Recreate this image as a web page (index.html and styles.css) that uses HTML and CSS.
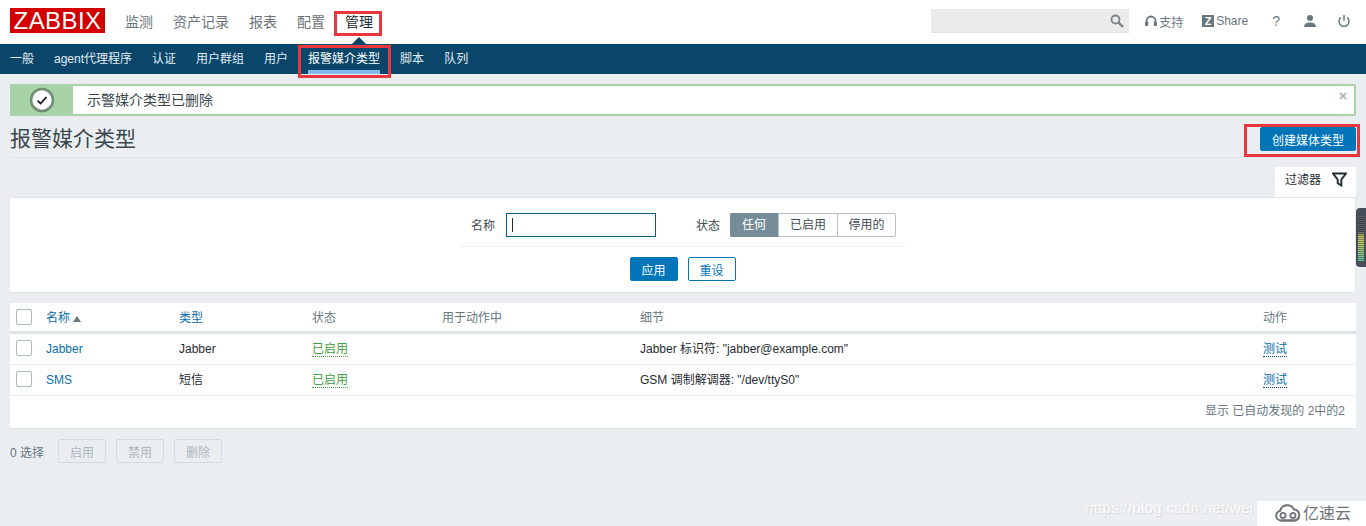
FILE: index.html
```html
<!DOCTYPE html>
<html>
<head>
  <title>报警媒介类型</title>
  <meta charset="UTF-8">
  <link rel="stylesheet" href="styles.css">
</head>
<body>
<header class="topbar">
  <div class="logo">ZABBIX</div>
  <nav class="mainNav">
    <a>监测</a>
    <a>资产记录</a>
    <a>报表</a>
    <a>配置</a>
    <a class="current">管理</a>
  </nav>
  <div class="topTools">
    <div class="searchBox">
      <svg width="14" height="14" viewBox="0 0 14 14"><circle cx="5.500" cy="5.500" r="4" fill="none" stroke="#7a8288" stroke-width="1.800"/><path d="M8.500 8.500L13 13" stroke="#7a8288" stroke-width="2.400"/></svg>
    </div>
    <a class="tool toolSupport">
      <svg width="12" height="13" viewBox="0 0 12 13"><path d="M1.500 9V6a4.500 4.500 0 0 1 9 0v3" fill="none" stroke="#68777f" stroke-width="1.800"/><rect x="0" y="6.500" width="3.200" height="4.500" rx="1" fill="#68777f"/><rect x="8.800" y="6.500" width="3.200" height="4.500" rx="1" fill="#68777f"/></svg>
      支持
    </a>
    <a class="tool toolShare"><span class="zBadge">Z</span>Share</a>
    <a class="tool toolHelp">?</a>
    <a class="tool toolUser">
      <svg width="14" height="14" viewBox="0 0 14 14"><circle cx="7" cy="4" r="3" fill="#68777f"/><path d="M1 13c0-3.200 2.600-4.600 6-4.600s6 1.400 6 4.600z" fill="#68777f"/></svg>
    </a>
    <a class="tool toolPower">
      <svg width="14" height="14" viewBox="0 0 14 14"><path d="M4 3.300a5 5 0 1 0 6 0" fill="none" stroke="#68777f" stroke-width="1.500"/><path d="M7 1v6" stroke="#68777f" stroke-width="1.500"/></svg>
    </a>
  </div>
</header>

<nav class="subNav">
  <a>一般</a>
  <a>agent代理程序</a>
  <a>认证</a>
  <a>用户群组</a>
  <a>用户</a>
  <a class="selected">报警媒介类型</a>
  <a>脚本</a>
  <a>队列</a>
</nav>

<main class="content">
  <div class="msgGood">
    <div class="msgIcon">
      <svg width="26" height="26" viewBox="0 0 26 26"><circle cx="13" cy="13" r="11" fill="#fff" stroke="#6f8f70" stroke-width="2.600"/><path d="M8.500 13.500l3 3 6-6.500" fill="none" stroke="#111" stroke-width="1.700"/></svg>
    </div>
    <div class="msgText">示警媒介类型已删除</div>
    <svg class="msgClose" width="8" height="8" viewBox="0 0 8 8"><path d="M1 1l6 6M7 1L1 7" stroke="#b4bcc2" stroke-width="2"/></svg>
  </div>

  <div class="titleRow">
    <h1>报警媒介类型</h1>
    <button class="btnPrimary btnCreate">创建媒体类型</button>
  </div>

  <div class="filterTabRow">
    <div class="filterTab">
      过滤器
      <svg width="15" height="15" viewBox="0 0 15 15"><path d="M1 1.500h13L9.300 7.500v6l-3.600-2.200v-3.800z" fill="none" stroke="#1f2c33" stroke-width="1.900"/></svg>
    </div>
  </div>
  <section class="filterBox">
    <div class="filterFields">
      <label>名称</label>
      <div class="textInput"><span class="caret"></span></div>
      <label class="labelStatus">状态</label>
      <div class="radioGroup">
        <span class="on">任何</span>
        <span>已启用</span>
        <span>停用的</span>
      </div>
    </div>
    <div class="filterButtons">
      <button class="btnPrimary btnSmall">应用</button>
      <button class="btnAlt btnSmall">重设</button>
    </div>
  </section>

  <section class="listBox">
    <table class="list">
      <colgroup>
        <col class="colCheck"><col class="colName"><col class="colType"><col class="colStatus">
        <col class="colUsed"><col class="colDetail"><col class="colAction">
      </colgroup>
      <thead>
        <tr>
          <th><span class="check"></span></th>
          <th><a class="link">名称</a><span class="arrowUp"></span></th>
          <th><a class="link">类型</a></th>
          <th>状态</th>
          <th>用于动作中</th>
          <th>细节</th>
          <th>动作</th>
        </tr>
      </thead>
      <tbody>
        <tr>
          <td><span class="check"></span></td>
          <td><a class="link">Jabber</a></td>
          <td>Jabber</td>
          <td><a class="enabled">已启用</a></td>
          <td></td>
          <td>Jabber 标识符: "jabber@example.com"</td>
          <td><a class="dotted">测试</a></td>
        </tr>
        <tr>
          <td><span class="check"></span></td>
          <td><a class="link">SMS</a></td>
          <td>短信</td>
          <td><a class="enabled">已启用</a></td>
          <td></td>
          <td>GSM 调制解调器: "/dev/ttyS0"</td>
          <td><a class="dotted">测试</a></td>
        </tr>
      </tbody>
    </table>
    <div class="listStats">显示 已自动发现的 2中的2</div>
  </section>

  <div class="actionBar">
    <span class="selCount">0 选择</span>
    <button class="btnOff">启用</button>
    <button class="btnOff">禁用</button>
    <button class="btnOff">删除</button>
  </div>
</main>

<!-- annotations drawn over the screenshot -->
<div class="mark markAdmin"></div>
<div class="mark markMedia"></div>
<div class="mark markCreate"></div>

<div class="sideMeter"><span></span></div>
<div class="watermark">https://blog.csdn.net/wei</div>
<div class="yisu">
  <svg width="26" height="18" viewBox="0 0 26 18"><path d="M6 16.500a4.800 4.800 0 0 1-1-9.500A7.500 7.500 0 0 1 19 5.500a5.600 5.600 0 0 1 1 11z" fill="none" stroke="#6e7377" stroke-width="2"/><path d="M6 16.500h14" stroke="#6e7377" stroke-width="2"/><circle cx="8" cy="11.500" r="2.600" fill="none" stroke="#6e7377" stroke-width="1.800"/><circle cx="18" cy="11.500" r="2.600" fill="none" stroke="#6e7377" stroke-width="1.800"/></svg>
  <span>亿速云</span>
</div>
</body>
</html>
```

FILE: styles.css
```css
* {
  box-sizing: border-box;
}

body {
  margin: 0;
  height: 526px;
  overflow: hidden;
  background-color: #ebeef0;
  color: #1f2c33;
  font-family: "Liberation Sans", "Noto Sans CJK SC", sans-serif;
  font-size: 12px;
}

button {
  font-family: inherit;
  font-size: 12px;
  border-radius: 2px;
  padding: 0;
}

/* top bar */
.topbar {
  display: flex;
  align-items: center;
  height: 44px;
  padding: 0 10px;
  background-color: #fff;
}

.logo {
  width: 95px;
  height: 25px;
  margin-top: -4px;
  background-color: #d40000;
  color: #fff;
  font-size: 24px;
  line-height: 25px;
  text-align: center;
  letter-spacing: 0.4px;
}

.mainNav {
  display: flex;
  gap: 20px;
  margin-left: 20px;
  margin-top: -2px;
  font-size: 14px;
  color: #6b7478;
}

.mainNav .current {
  color: #1f2c33;
}

.topTools {
  display: flex;
  align-items: center;
  margin-left: auto;
  margin-top: -2px;
  color: #68777f;
}

.searchBox {
  display: flex;
  align-items: center;
  justify-content: flex-end;
  width: 198px;
  height: 24px;
  padding-right: 5px;
  background-color: #ebebeb;
  border-bottom: 1px solid #e2e2e2;
}

.tool {
  display: flex;
  align-items: center;
}

.toolSupport {
  gap: 2px;
  margin-left: 16px;
}

.toolShare {
  margin-left: 19px;
}

.zBadge {
  width: 12px;
  height: 12px;
  margin-right: 2px;
  background-color: #68777f;
  color: #fff;
  font-size: 11px;
  font-weight: bold;
  line-height: 12px;
  text-align: center;
}

.toolHelp {
  margin-left: 24px;
  font-size: 14px;
}

.toolUser {
  margin-left: 23px;
}

.toolPower {
  margin-left: 20px;
  margin-right: 5px;
}

/* sub nav */
.subNav {
  position: relative;
  display: flex;
  gap: 20px;
  height: 30px;
  padding: 0 10px;
  background-color: #0a466a;
  color: #e4edf3;
  line-height: 30px;
}

.subNav::before {
  content: "";
  position: absolute;
  left: 352px;
  top: -7px;
  border-left: 7px solid transparent;
  border-right: 7px solid transparent;
  border-bottom: 7px solid #0a466a;
}

.subNav .selected {
  color: #fff;
  height: 30px;
  border-bottom: 4px solid #7fbcec;
}

/* page */
.content {
  padding: 10px 10px 0;
}

.msgGood {
  position: relative;
  display: flex;
  height: 32px;
  background-color: #fff;
  border: 2px solid #a8d3a8;
  border-radius: 2px;
}

.msgIcon {
  display: flex;
  align-items: center;
  justify-content: center;
  width: 63px;
  margin: -2px 0 -2px -2px;
  background-color: #a8d3a8;
}

.msgText {
  padding-left: 14px;
  font-size: 14px;
  line-height: 28px;
  color: #3a474f;
}

.msgClose {
  position: absolute;
  right: 7px;
  top: 6px;
}

.titleRow {
  display: flex;
  align-items: flex-start;
  justify-content: space-between;
  height: 42px;
  border-bottom: 1px solid #dfe4e7;
}

.titleRow h1 {
  margin: 10px 0 0;
  font-size: 21px;
  font-weight: normal;
  line-height: 26px;
  color: #3a474f;
}

.btnPrimary {
  background-color: #0275b8;
  border: 1px solid #0275b8;
  color: #fff;
}

.btnCreate {
  width: 96px;
  height: 24px;
  margin-top: 11px;
}

.filterTabRow {
  display: flex;
  justify-content: flex-end;
  margin-top: 9px;
}

.filterTab {
  display: flex;
  justify-content: space-between;
  align-items: flex-start;
  width: 81px;
  height: 30px;
  padding: 5px 9px 0 10px;
  background-color: #fff;
  color: #1f2c33;
  line-height: 16px;
}

.filterBox {
  height: 96px;
  background-color: #fff;
  border-top: 1px solid #dfe4e7;
  border-bottom: 1px solid #dfe4e7;
  border-right: 1px solid #e6e9eb;
}

.filterFields {
  display: flex;
  align-items: center;
  width: 444px;
  height: 49px;
  margin: 0 0 0 451px;
  padding-left: 10px;
  padding-top: 5px;
  border-bottom: 1px solid #ebeef0;
  color: #3f4d55;
}

.textInput {
  width: 150px;
  height: 24px;
  margin-left: 11px;
  padding: 4px 0 0 5px;
  border: 1px solid #0a5d86;
}

.caret {
  display: block;
  width: 1px;
  height: 14px;
  background-color: #1f2c33;
}

.labelStatus {
  margin-left: 40px;
}

.radioGroup {
  display: flex;
  margin-left: 10px;
  height: 24px;
  line-height: 22px;
  text-align: center;
  border: 1px solid #b8c2c8;
  border-radius: 2px;
  color: #3f4d55;
}

.radioGroup span {
  width: 59px;
  border-left: 1px solid #b8c2c8;
}

.radioGroup span:last-child {
  width: 58px;
}

.radioGroup span:first-child {
  width: 48px;
  margin: -1px 0 -1px -1px;
  line-height: 24px;
  border-left: 0;
  background-color: #768d99;
  color: #fff;
  border-radius: 2px 0 0 2px;
}

.filterButtons {
  display: flex;
  justify-content: center;
  gap: 10px;
  margin-top: 10px;
}

.btnSmall {
  width: 48px;
  height: 24px;
}

.btnAlt {
  background-color: #fff;
  border: 1px solid #0275b8;
  color: #0275b8;
}

/* list */
.listBox {
  height: 126px;
  margin-top: 10px;
  background-color: #fff;
  border-bottom: 1px solid #dfe4e7;
}

.list {
  width: 100%;
  border-collapse: separate;
  border-spacing: 0;
  table-layout: fixed;
}

.colCheck { width: 36px; }
.colName { width: 133px; }
.colType { width: 133px; }
.colStatus { width: 130px; }
.colUsed { width: 198px; }
.colDetail { width: 623px; }

.list th,
.list td {
  padding: 0;
  text-align: left;
  font-weight: normal;
  line-height: 14px;
  vertical-align: middle;
  overflow: hidden;
  white-space: nowrap;
}

.list th {
  height: 31px;
  padding-top: 2px;
  color: #68777f;
  border-bottom: 3px solid #dfe4e7;
}

.list td {
  height: 31px;
  border-bottom: 1px solid #ebeef0;
  color: #1f2c33;
}

.list th:first-child,
.list td:first-child {
  padding-left: 6px;
}

.check {
  display: block;
  width: 16px;
  height: 16px;
  margin-bottom: 2px;
  background-color: #fff;
  border: 1px solid #acbbc2;
  border-radius: 2px;
}

.link {
  color: #0a6ea8;
}

.arrowUp {
  display: inline-block;
  margin-left: 3px;
  border-left: 4px solid transparent;
  border-right: 4px solid transparent;
  border-bottom: 6px solid #68777f;
}

.enabled {
  display: inline-block;
  color: #429e47;
  border-bottom: 1px dotted #429e47;
}

.dotted {
  display: inline-block;
  color: #0a6ea8;
  border-bottom: 1px dotted #0a466a;
}

.listStats {
  padding-right: 11px;
  text-align: right;
  color: #68777f;
  line-height: 31px;
}

.actionBar {
  display: flex;
  align-items: center;
  gap: 10px;
  margin-top: 10px;
  color: #68777f;
}

.selCount {
  margin-right: 4px;
}

.btnOff {
  width: 48px;
  height: 24px;
  background-color: #ebeef0;
  border: 1px solid #d5dade;
  color: #acb6bc;
}

/* red annotation boxes */
.mark {
  position: absolute;
  border: 3px solid #e8373f;
}

.markAdmin {
  left: 334px;
  top: 11px;
  width: 48px;
  height: 25px;
}

.markMedia {
  left: 298px;
  top: 45px;
  width: 93px;
  height: 33px;
}

.markCreate {
  left: 1244px;
  top: 124px;
  width: 116px;
  height: 33px;
}

.sideMeter {
  position: absolute;
  left: 1356px;
  top: 208px;
  width: 10px;
  height: 59px;
  padding: 8px 0 6px 2px;
  background-color: #474d59;
  border-radius: 4px 0 0 4px;
}

.sideMeter span {
  display: block;
  width: 6px;
  height: 100%;
  background: repeating-linear-gradient(to bottom, transparent 0, transparent 1px, rgba(0,0,0,.35) 1px, rgba(0,0,0,.35) 2px),
    linear-gradient(to bottom, #5a5f68 0, #5a5f68 35%, #c9c66a 45%, #b7c96e 65%, #6cc5a8 100%);
}

.watermark {
  position: absolute;
  left: 1085px;
  top: 499px;
  white-space: nowrap;
  color: rgba(255,255,255,.85);
  font-size: 15px;
  line-height: 18px;
  letter-spacing: 0.3px;
  text-shadow: 1px 1px 1px #d3d7da;
}

.yisu {
  position: absolute;
  left: 1257px;
  top: 501px;
  width: 109px;
  height: 25px;
  display: flex;
  align-items: center;
  gap: 2px;
  padding: 0 0 1px 18px;
  background-color: #fff;
  color: #6e7377;
  font-size: 16px;
}

.yisu span {
  margin-top: -2px;
}
```
